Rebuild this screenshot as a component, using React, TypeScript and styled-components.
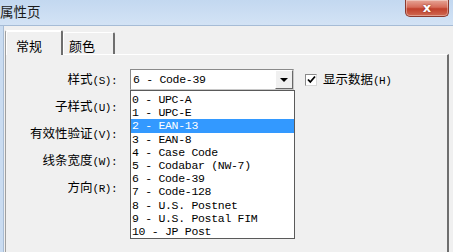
import React from "react";
import styled, { createGlobalStyle } from "styled-components";

const Global = createGlobalStyle`
  html, body { margin: 0; padding: 0; }
  body {
    width: 453px; height: 252px; overflow: hidden;
    background: #f0f0f0;
    font-family: "Noto Sans CJK SC", "Liberation Sans", sans-serif;
  }
`;

const Window = styled.div`
  width: 453px; height: 252px;
  display: flex; flex-direction: column;
  background: #f0f0f0;
`;

const TitleBar = styled.div`
  height: 25px;
  flex: none;
  display: flex; align-items: flex-start; justify-content: space-between;
  background: linear-gradient(#c3d8f0, #d3e3f5);
  border-bottom: 1px solid #a6bcd6;
`;

const Title = styled.div`
  font-size: 13.5px; line-height: 14px; color: #1a1a1a;
  padding: 4px 0 0 0;
  font-family: "Noto Sans CJK SC", sans-serif;
`;

const CloseButton = styled.div`
  width: 44px; height: 17px; margin-right: 4px;
  box-sizing: border-box;
  border: 1px solid #8b3a2e; border-top: none;
  border-radius: 0 0 5px 5px;
  background: linear-gradient(#e6a597 0%, #d66c5a 45%, #c0402c 55%, #d06a52 100%);
  box-shadow: inset 0 0 0 1px rgba(255,255,255,0.35);
  display: flex; align-items: center; justify-content: center;
  color: #fff; font: bold 13px/13px "DejaVu Sans", sans-serif;
  text-shadow: 0 0 2px #7a2418;
  padding-bottom: 2px;
`;

const Body = styled.div`
  flex: 1; display: flex; min-height: 0;
`;

const FrameEdge = styled.div`
  width: 3px; flex: none;
  background: #cadcf1;
  border-right: 1px solid #a9bdd5;
`;

const Client = styled.div`
  flex: 1; display: flex; flex-direction: column;
  padding: 4px 0 0 1px;
`;

const TabStrip = styled.div`
  display: flex; align-items: flex-end; height: 24px; flex: none;
  position: relative; z-index: 1;
`;

const Tab = styled.div<{ $active?: boolean }>`
  box-sizing: border-box;
  height: ${p => (p.$active ? 25 : 22)}px;
  width: ${p => (p.$active ? 58 : 52)}px;
  margin-bottom: ${p => (p.$active ? -1 : 0)}px;
  padding: ${p => (p.$active ? "8px 0 0 10px" : "6px 0 0 5px")};
  background: #f0f0f0;
  border-left: 1px solid ${p => (p.$active ? "#a0a0a0" : "#ffffff")};
  border-top: 1px solid #ffffff;
  border-right: 2px solid #6e6e6e;
  box-shadow: ${p => (p.$active ? "inset 1px 1px 0 #ffffff" : "inset 0 0 0 0 transparent")};
  border-radius: 2px 2px 0 0;
  font-size: 13px; line-height: 14px; color: #000;
`;

const Panel = styled.div`
  box-sizing: border-box;
  width: 444px; flex: 1;
  border: 1px solid #a0a0a0;
  border-right: 2px solid #6e6e6e;
  border-top-color: #ffffff;
  border-bottom: none;
  background: #f0f0f0;
  padding-top: 14px;
  display: flex; flex-direction: column; gap: 6px;
`;

const Row = styled.div`
  display: flex; align-items: center; height: 21px;
`;

const Label = styled.div`
  width: 111px; margin-right: 13px;
  text-align: right; white-space: nowrap;
  font-size: 12.5px; line-height: 21px; color: #000;
`;

const Key = styled.span`
  font-family: "Liberation Mono", monospace;
  font-size: 11px; letter-spacing: -0.5px;
`;

const ComboWrap = styled.div`
  position: relative; width: 164px; height: 21px;
`;

const Combo = styled.div`
  box-sizing: border-box; width: 164px; height: 21px;
  border: 1px solid #8a8a8a;
  border-right-color: #c8c8c8; border-bottom-color: #c8c8c8;
  background: #fff;
  display: flex; align-items: center; justify-content: space-between;
  padding-left: 2px;
`;

const MonoText = styled.span`
  font-family: "Liberation Mono", monospace;
  font-size: 11.5px; letter-spacing: -0.3px; color: #000;
  white-space: pre;
`;

const DropButton = styled.div`
  box-sizing: border-box; width: 18px; height: 19px;
  background: #f0f0f0;
  border-left: 1px solid #ffffff; border-top: 1px solid #ffffff;
  border-right: 1px solid #696969; border-bottom: 1px solid #696969;
  display: flex; align-items: center; justify-content: center;
  &::after {
    content: ""; width: 0; height: 0;
    border-left: 4px solid transparent; border-right: 4px solid transparent;
    border-top: 4px solid #000;
  }
`;

const ListBox = styled.div`
  position: absolute; left: 0; top: 21px;
  box-sizing: border-box; width: 165px; height: 149px;
  background: #fff; border: 1px solid #5a5a5a;
  padding-top: 2px;
  z-index: 5;
`;

const ListItem = styled.div<{ $selected?: boolean }>`
  height: 13.2px; line-height: 13px; padding-left: 1px;
  background: ${p => (p.$selected ? "#3399ff" : "transparent")};
  color: ${p => (p.$selected ? "#fff" : "#000")};
  font-family: "Liberation Mono", monospace;
  font-size: 11.5px; letter-spacing: -0.3px;
  white-space: pre;
`;

const CheckField = styled.label`
  display: flex; align-items: center; margin-left: 11px; gap: 6px;
`;

const CheckBox = styled.span`
  box-sizing: border-box; width: 12px; height: 12px;
  border: 1px solid #8a8a8a; border-right-color: #d8d8d8; border-bottom-color: #d8d8d8;
  background: #fff;
  display: flex; align-items: center; justify-content: center;
`;

const CheckText = styled.span`
  font-size: 12.5px; line-height: 21px; color: #000; white-space: nowrap;
`;

const items = [
  "0 - UPC-A",
  "1 - UPC-E",
  "2 - EAN-13",
  "3 - EAN-8",
  "4 - Case Code",
  "5 - Codabar (NW-7)",
  "6 - Code-39",
  "7 - Code-128",
  "8 - U.S. Postnet",
  "9 - U.S. Postal FIM",
  "10 - JP Post",
];

const labels: [string, string][] = [
  ["子样式", "(U):"],
  ["有效性验证", "(V):"],
  ["线条宽度", "(W):"],
  ["方向", "(R):"],
];

export default function App() {
  return (
    <Window>
      <Global />
      <TitleBar>
        <Title>属性页</Title>
        <CloseButton>x</CloseButton>
      </TitleBar>
      <Body>
        <FrameEdge />
        <Client>
          <TabStrip>
            <Tab $active>常规</Tab>
            <Tab>颜色</Tab>
          </TabStrip>
          <Panel>
            <Row>
              <Label>样式<Key>(S):</Key></Label>
              <ComboWrap>
                <Combo>
                  <MonoText>6 - Code-39</MonoText>
                  <DropButton />
                </Combo>
                <ListBox>
                  {items.map((t, i) => (
                    <ListItem key={t} $selected={i === 2}>{t}</ListItem>
                  ))}
                </ListBox>
              </ComboWrap>
              <CheckField>
                <CheckBox>
                  <svg width="9" height="9" viewBox="0 0 9 9">
                    <path d="M1 4.5 L3.3 7 L8 1.5" fill="none" stroke="#000" strokeWidth="1.8" />
                  </svg>
                </CheckBox>
                <CheckText>显示数据<Key>(H)</Key></CheckText>
              </CheckField>
            </Row>
            {labels.map(([c, k]) => (
              <Row key={c}>
                <Label>{c}<Key>{k}</Key></Label>
              </Row>
            ))}
          </Panel>
        </Client>
      </Body>
    </Window>
  );
}
